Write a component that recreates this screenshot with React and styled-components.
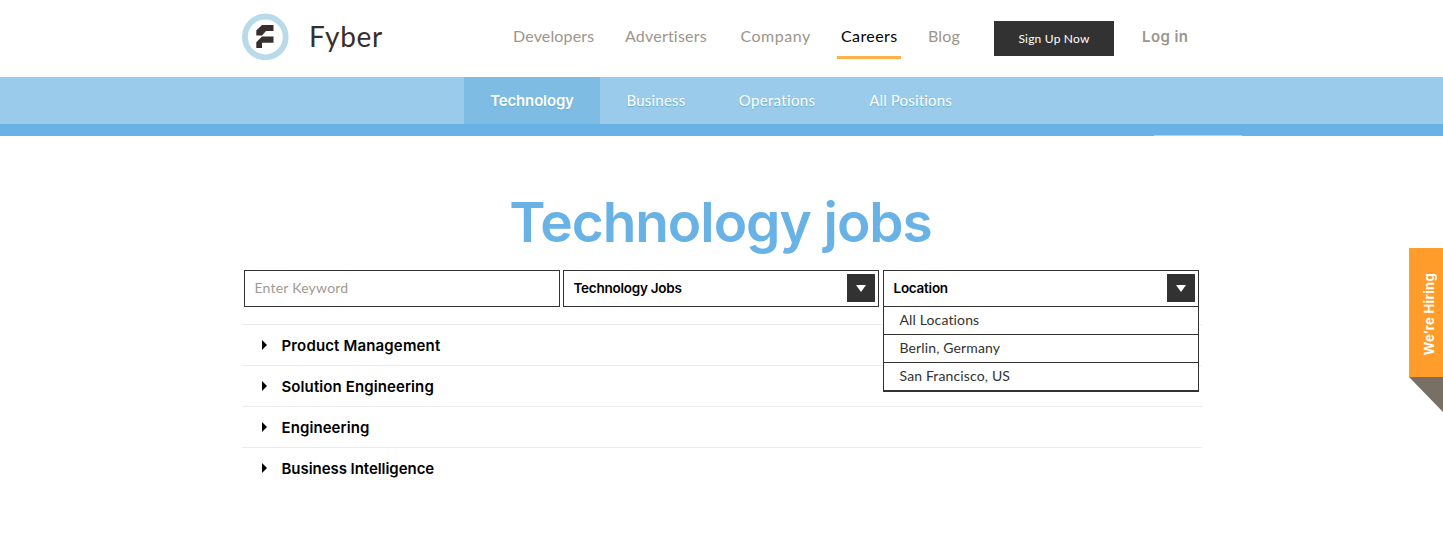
import React from 'react';
import styled, { createGlobalStyle } from 'styled-components';

const regular = 'Lato, "Liberation Sans", sans-serif';
const strong = 'Inter, "Liberation Sans", sans-serif';

const GlobalStyle = createGlobalStyle`
  *, *::before, *::after { box-sizing: border-box; }
  body { margin: 0; background: #fff; color: #000; font-family: ${regular}; }
  ul { margin: 0; padding: 0; list-style: none; }
  a { color: inherit; text-decoration: none; white-space: nowrap; }
`;

const Page = styled.div`
  position: relative;
  height: 550px;
  overflow: hidden;
`;

const Header = styled.header`
  width: 959px;
  height: 77px;
  margin: 0 auto;
  display: flex;
  align-items: flex-start;
`;

const Brand = styled.a`
  display: flex;
  align-items: flex-start;
  width: 268px;
  padding-top: 13px;
  gap: 20px;
  color: #372e2e;
  font-size: 28px;
  line-height: 46px;
  letter-spacing: 0.65px;

  svg { flex: none; }
`;

const Nav = styled.nav`
  display: flex;
`;

const NavItem = styled.a`
  width: ${p => p.$width}px;
  height: 59px;
  margin-right: ${p => p.$gap ?? 23}px;
  padding-left: ${p => p.$inset ?? 4}px;
  border-bottom: 3px solid ${p => (p.$active ? '#ffb24a' : 'transparent')};
  color: ${p => (p.$active ? '#000' : '#9c958b')};
  font-size: 16px;
  line-height: 72px;
  letter-spacing: ${p => p.$track}px;
`;

const SignUp = styled.a`
  width: 120px;
  height: 35px;
  margin-top: 21px;
  background: #323232;
  color: #fff;
  font-size: 12px;
  line-height: 36px;
  letter-spacing: 0.2px;
  text-align: center;
`;

const LogIn = styled.a`
  margin-left: 28px;
  color: #9c958b;
  font: 600 15px/74px ${strong};
  letter-spacing: 0.4px;
`;

const SubNav = styled.nav`
  display: flex;
  justify-content: center;
  height: 59px;
  background: #9bcbea;
  border-bottom: 12px solid #69b2e6;
`;

const SubNavItem = styled.a`
  width: ${p => p.$width}px;
  color: #fff;
  background: ${p => (p.$active ? '#7ebce3' : 'transparent')};
  font: ${p => (p.$active ? `600 15px/48px ${strong}` : `400 15px/47px ${regular}`)};
  letter-spacing: ${p => p.$track}px;
  text-align: center;
  text-shadow: 0 1px 1px #68aec6;
`;

const TabEdge = styled.span`
  position: absolute;
  top: 135px;
  left: 1154px;
  width: 88px;
  height: 1px;
  background: #a9d6f2;
`;

const Main = styled.main`
  width: 959px;
  margin: 0 auto;
`;

const Title = styled.h1`
  margin: 0;
  padding: 51px 2px 1px 0;
  color: #69b2e6;
  font: 600 55px/70px ${strong};
  letter-spacing: -1.05px;
  text-align: center;
`;

const Filters = styled.div`
  display: flex;
  margin-top: 12px;
  padding-left: 2px;
`;

const Field = styled.div`
  position: relative;
  display: flex;
  align-items: flex-start;
  justify-content: space-between;
  width: 316px;
  height: 37px;
  margin-right: ${p => p.$gap ?? 0}px;
  padding: 3px 3px 0 9.5px;
  border: 1px solid #323232;
`;

const KeywordInput = styled.input`
  width: 100%;
  height: 28px;
  padding: 0;
  border: 0;
  outline: 0;
  background: transparent;
  font: 14px/28px ${regular};
  letter-spacing: 0.22px;

  &::placeholder { color: #a19a90; opacity: 1; }
`;

const Selected = styled.span`
  font: 600 13.5px/28px ${strong};
  letter-spacing: -0.25px;
`;

const SelectButton = styled.span`
  display: flex;
  align-items: center;
  justify-content: center;
  width: 28px;
  height: 28px;
  background: #323232;
`;

const Menu = styled.ul`
  position: absolute;
  z-index: 1;
  top: 36px;
  left: -1px;
  width: 316px;
  background: #fff;
  border: 1px solid #323232;
  border-top: 0;
`;

const Option = styled.li`
  height: 28px;
  padding-left: 15.5px;
  border-bottom: 1px solid #323232;
  color: #323232;
  font-size: 14px;
  line-height: 25px;
  letter-spacing: 0.14px;
`;

const Departments = styled.ul`
  margin: 17px -1px 0 0;
`;

const Department = styled.li`
  display: flex;
  align-items: center;
  gap: 14.5px;
  height: 41px;
  padding: 2px 0 0 20px;
  border-top: 1px solid #ebebeb;
  font: 600 15px/20px ${strong};
  letter-spacing: ${p => p.$track}px;

  svg { margin-top: -2px; }
`;

const Ribbon = styled.aside`
  position: absolute;
  top: 248px;
  right: 0;
  width: 34px;
`;

const RibbonLabel = styled.a`
  display: flex;
  align-items: center;
  justify-content: center;
  width: 34px;
  height: 129px;
  padding: 3px 0 0 6px;
  background: #ff9c2a;
  color: #fff;
  font: 700 13px/20px ${strong};
  letter-spacing: 0.33px;

  span { writing-mode: vertical-rl; transform: rotate(180deg); }
`;

const RibbonFold = styled.div`
  height: 35px;
  background: #787064;
  clip-path: polygon(0 0, 100% 0, 100% 100%);
`;

const Logo = () => (
  <svg width="47" height="47" viewBox="0 0 47 47">
    <circle cx="23.3" cy="23.9" r="20.4" fill="none" stroke="#b8daeb" strokeWidth="5.8" />
    <path d="M20 12H31.5V18H24L20 22.5H14.3V17.5Z" fill="#372e2e" />
    <path d="M20 23.5H31.5V29.7H20V35H14.3V29.2Z" fill="#372e2e" />
  </svg>
);

const ArrowDown = () => (
  <svg width="10" height="7" viewBox="0 0 10 7"><path d="M0 0H10L5 7Z" fill="#fff" /></svg>
);

const ArrowRight = () => (
  <svg width="5" height="10" viewBox="0 0 5 10"><path d="M0 0L5 5L0 10Z" fill="#000" /></svg>
);

const departments = [
  ['Product Management', 0.15],
  ['Solution Engineering', 0.1],
  ['Engineering', 0.08],
  ['Business Intelligence', -0.05],
];

export default function App() {
  return (
    <Page>
      <GlobalStyle />
      <Header>
        <Brand href="#"><Logo />Fyber</Brand>
        <Nav>
          <NavItem href="#" $width={88} $inset={3} $track={0.15}>Developers</NavItem>
          <NavItem href="#" $width={89} $gap={26} $track={0.2}>Advertisers</NavItem>
          <NavItem href="#" $width={78} $inset={4.5} $track={0.5}>Company</NavItem>
          <NavItem href="#" $width={64} $track={0.4} $active>Careers</NavItem>
          <NavItem href="#" $width={39} $gap={31} $track={0.15}>Blog</NavItem>
        </Nav>
        <SignUp href="#">Sign Up Now</SignUp>
        <LogIn href="#">Log in</LogIn>
      </Header>
      <SubNav>
        <SubNavItem href="#" $width={136} $track={-0.15} $active>Technology</SubNavItem>
        <SubNavItem href="#" $width={112} $track={0.2}>Business</SubNavItem>
        <SubNavItem href="#" $width={130} $track={0.32}>Operations</SubNavItem>
        <SubNavItem href="#" $width={137} $track={0.16}>All Positions</SubNavItem>
      </SubNav>
      <TabEdge />
      <Main>
        <Title>Technology jobs</Title>
        <Filters>
          <Field $gap={3}><KeywordInput placeholder="Enter Keyword" /></Field>
          <Field $gap={4}>
            <Selected>Technology Jobs</Selected>
            <SelectButton><ArrowDown /></SelectButton>
          </Field>
          <Field>
            <Selected>Location</Selected>
            <SelectButton><ArrowDown /></SelectButton>
            <Menu>
              <Option>All Locations</Option>
              <Option>Berlin, Germany</Option>
              <Option>San Francisco, US</Option>
            </Menu>
          </Field>
        </Filters>
        <Departments>
          {departments.map(([name, track]) => (
            <Department key={name} $track={track}><ArrowRight />{name}</Department>
          ))}
        </Departments>
      </Main>
      <Ribbon>
        <RibbonLabel href="#"><span>We’re Hiring</span></RibbonLabel>
        <RibbonFold />
      </Ribbon>
    </Page>
  );
}
